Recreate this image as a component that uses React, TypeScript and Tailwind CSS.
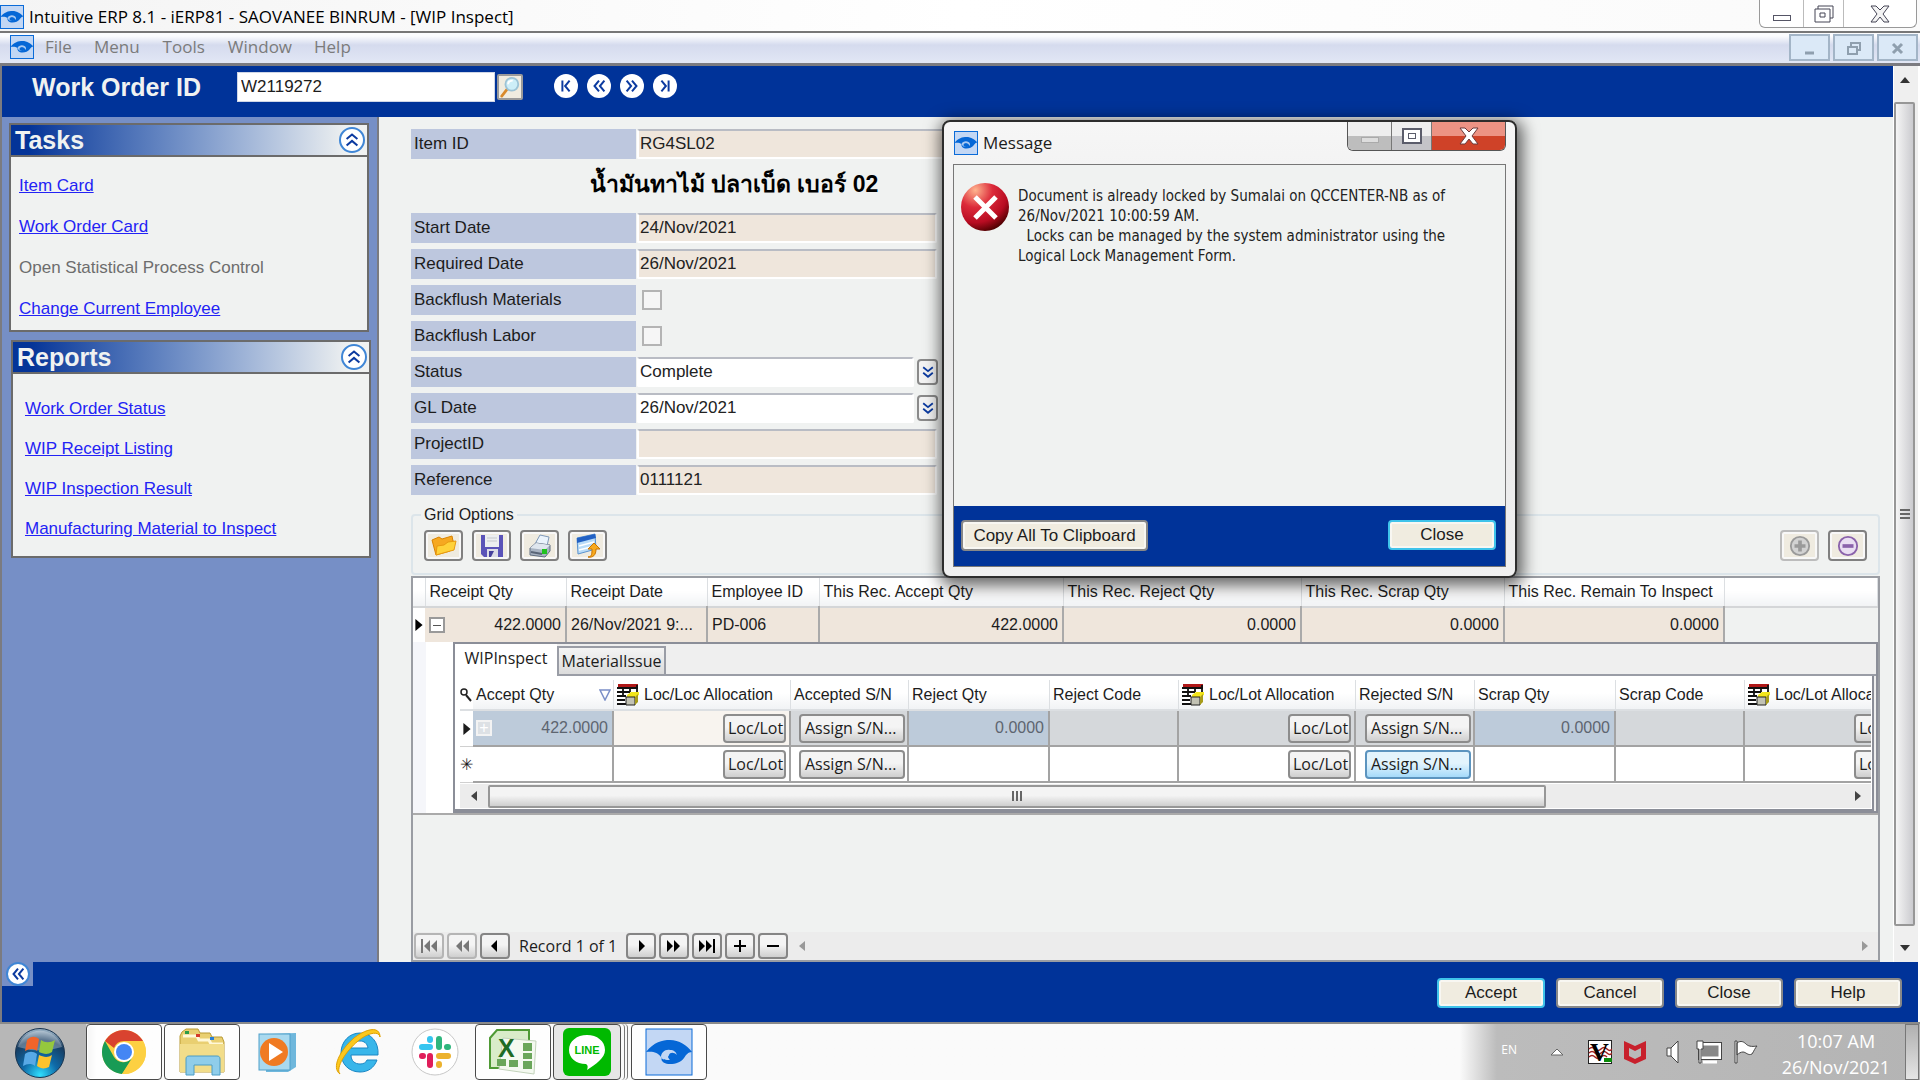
import type { ReactNode } from 'react';

function EyeLogo({ className }: { className: string }) {
  return (
    <svg viewBox="0 0 48 48" preserveAspectRatio="none" className={className} aria-hidden="true">
      <rect x="1" y="1" width="46" height="46" fill="#c3d7f4" stroke="#0b6bd8" strokeWidth="2" />
      <path d="M1 24C8 14 17 12 25 12c9 0 17 5 22 11-4 0-6 3-8 6-3 4-8 6-14 6-7 0-11-4-10-9-4-3-9-3-14-2z" fill="#0567d6" />
      <path d="M15 26c2-5 9-7 14-4 3 2 4 5 2 8-1-4-5-6-9-4 2 0 5 1 6 4-4 3-11 2-13-4z" fill="#a9c9f2" />
      <path d="M19 28c0-4 6-5 9-2 2 3 0 6-3 6-4 0-6-2-6-4z" fill="#0567d6" />
    </svg>
  );
}

function Chevrons({ dir, className }: { dir: 'left' | 'right' | 'up' | 'down' | 'first' | 'last'; className: string }) {
  const paths = {
    left: 'M10 4 5 10l5 6M16 4l-5 6 5 6',
    right: 'M4 4l5 6-5 6M10 4l5 6-5 6',
    up: 'M4 9l6-5 6 5M4 16l6-5 6 5',
    down: 'M4 4l6 5 6-5M4 11l6 5 6-5',
    first: 'M6 4v12M14 4l-5 6 5 6',
    last: 'M14 4v12M6 4l5 6-5 6',
  };
  return (
    <svg viewBox="0 0 20 20" className={className} fill="none" stroke="#0b3aa0" strokeWidth="2.2" aria-hidden="true">
      <path d={paths[dir]} />
    </svg>
  );
}

function TriangleIcon({ dir, className }: { dir: 'left' | 'right' | 'up' | 'down'; className: string }) {
  const pts = { left: '8,0 8,10 2,5', right: '2,0 2,10 8,5', up: '0,8 10,8 5,2', down: '0,2 10,2 5,8' };
  return (
    <svg viewBox="0 0 10 10" className={className} fill="currentColor" aria-hidden="true">
      <polygon points={pts[dir]} />
    </svg>
  );
}

function Magnifier() {
  return (
    <svg viewBox="0 0 24 24" className="size-6" aria-hidden="true">
      <path d="M3 22l7-9" stroke="#d98a2b" strokeWidth="3" strokeLinecap="round" />
      <circle cx="14" cy="9" r="7" fill="#cdeef8" stroke="#9cc3d6" strokeWidth="2" />
      <path d="M10 9c0-3 2-4 5-4" stroke="#fff" strokeWidth="2" fill="none" />
    </svg>
  );
}

function SidePanel({ title, children, className }: { title: string; children: ReactNode; className: string }) {
  return (
    <section className={`border-2 border-[#6b6b6b] bg-[#f0f2f1] ${className}`}>
      <header className="flex h-8 items-center justify-between border-b-2 border-[#6b6b6b] bg-linear-to-r from-[#043498] from-5% to-[#f0f2f1] to-95% pl-1 pr-[2px]">
        <h2 className="text-[25px] font-bold leading-7 text-[#f0f2f1]">{title}</h2>
        <button aria-label={`Collapse ${title}`} className="flex size-[26px] items-center justify-center rounded-full border-2 border-[#3f86d6] bg-white">
          <Chevrons dir="up" className="size-[18px]" />
        </button>
      </header>
      {children}
    </section>
  );
}

const fieldBox = 'h-[30px] rounded-xs border-2 border-t-[#b9bcc4] border-x-white border-b-white text-[17px] text-[#222] px-px outline-none';

function FormRow({ label, id, children }: { label: string; id: string; children: ReactNode }) {
  return (
    <div className="flex h-[30px] items-center">
      <label htmlFor={id} className="mr-px flex h-[30px] w-[225px] shrink-0 items-center bg-[#bdc7de] pl-[3px] text-[17px]">
        {label}
      </label>
      {children}
    </div>
  );
}

function ReadonlyField({ id, value }: { id: string; value: string }) {
  return <input id={id} readOnly defaultValue={value} className={`${fieldBox} w-[300px] bg-[#efe6dc]`} />;
}

function DropButton({ label }: { label: string }) {
  return (
    <button aria-label={label} className="ml-[3px] flex h-[26px] w-[21px] items-center justify-center rounded-sm border-2 border-[#8a8a8a] bg-[#f3f3f3]">
      <Chevrons dir="down" className="size-4 shrink-0" />
    </button>
  );
}

function ToolButton({ label, children, dim }: { label: string; children: ReactNode; dim?: boolean }) {
  return (
    <button
      aria-label={label}
      className={`flex h-[31px] w-[39px] items-center justify-center rounded-sm border-2 bg-[#efebe0] shadow-[inset_0_0_0_2px_#f8f8f8] ${dim ? 'border-[#bcbcbc]' : 'border-[#808080]'}`}
    >
      {children}
    </button>
  );
}

function FolderIcon() {
  return (
    <svg viewBox="0 0 26 24" className="h-6 w-[26px]" aria-hidden="true">
      <path d="M1 6l7-3 3 2 10-3 1 5 2 1-5 9-14 4z" fill="#f6a821" stroke="#d98200" />
      <path d="M5 21l1-9 7-1 4-3 8-1-2 9z" fill="#ffd23a" stroke="#e89a10" />
    </svg>
  );
}

function DiskIcon() {
  return (
    <svg viewBox="0 0 26 26" className="size-[26px]" aria-hidden="true">
      <path d="M2 2h22v22H5l-3-3z" fill="#5a53b8" />
      <rect x="6" y="2" width="14" height="12" fill="#eceef0" />
      <path d="M8 5h10M8 8h10" stroke="#c5c8cc" />
      <rect x="8" y="16" width="11" height="8" fill="#dcdce6" />
      <path d="M10 24v-6l5 0-3 6z" fill="#45409c" />
    </svg>
  );
}

function PrinterIcon() {
  return (
    <svg viewBox="0 0 26 26" className="size-[26px]" aria-hidden="true">
      <path d="M8 11 13 2l9 2-2 9z" fill="#eaf3fc" stroke="#7e98b8" />
      <path d="M3 15l6-5 14 2v6l-5 6-15-2z" fill="#a8b3c2" stroke="#5f6d80" />
      <path d="M3 15l6-5 14 2-5 5z" fill="#dfe6ee" />
      <path d="M4 19l11 2" stroke="#596577" strokeWidth="2" />
      <rect x="15" y="16" width="5" height="5" fill="#20c220" />
    </svg>
  );
}

function ExportIcon() {
  return (
    <svg viewBox="0 0 26 26" className="size-[26px]" aria-hidden="true">
      <path d="M2 5l18-4 1 15-18 5z" fill="#b9dcf8" stroke="#5b93cf" />
      <path d="M2 5l18-4 1 4L2 10z" fill="#2261c4" />
      <path d="M4 13l15-4M4 17l12-3" stroke="#fff" strokeWidth="1.500" />
      <path d="M13 24c4 0 4-4 4-8h-4l6-6 6 6h-4c0 6-3 9-8 8z" fill="#f7a91e" stroke="#c87400" />
    </svg>
  );
}

function CircleSign({ kind }: { kind: 'plus' | 'minus' }) {
  const c = kind === 'plus' ? '#9a9a9a' : '#8a62ab';
  return (
    <svg viewBox="0 0 24 24" className="size-[22px]" aria-hidden="true">
      <circle cx="12" cy="12" r="10" fill={kind === 'plus' ? '#d2d2d2' : '#e9def2'} stroke={c} strokeWidth="2" />
      <path d={kind === 'plus' ? 'M6 12h12M12 6v12' : 'M6 12h12'} stroke={c} strokeWidth="4" />
    </svg>
  );
}

function AllocIcon() {
  return (
    <svg viewBox="0 0 22 22" className="size-[22px] shrink-0" aria-hidden="true">
      <rect x="1" y="1" width="19" height="20" fill="#fff" />
      <rect x="1" y="0" width="20" height="3" fill="#b01818" />
      <path d="M0 4h21M0 8h13M0 12h9M0 16h8M0 20h9M6 4v7M13 4v4M20 1v9" stroke="#111" strokeWidth="1.800" />
      <path d="M10 11l4-3h8v3l-4 2h-8z" fill="#f2e51a" />
      <path d="M9 13h9v8H9z" fill="#c2c2b4" stroke="#222" />
      <path d="M18 13l3-3v8l-3 3z" fill="#a89c1a" />
    </svg>
  );
}

const gridHead = 'h-[29px] border-r border-[#dcdfe2] bg-linear-to-b from-white from-45% to-[#f1f3f5] px-1 text-left text-[16px] font-normal whitespace-nowrap';
const gradBtn = 'bg-linear-to-b from-[#f4f4f4] from-45% to-[#cfcfcf]';

function CellButton({ children, className }: { children: ReactNode; className: string }) {
  return (
    <button className={`ml-auto block h-[29px] overflow-hidden rounded-sm border-2 text-left font-['Open_Sans',sans-serif] text-[16px] leading-6 whitespace-nowrap ${className}`}>
      {children}
    </button>
  );
}

const outerCols = [
  ['Receipt Qty', '422.0000'],
  ['Receipt Date', '26/Nov/2021 9:...'],
  ['Employee ID', 'PD-006'],
  ['This Rec. Accept Qty', '422.0000'],
  ['This Rec. Reject Qty', '0.0000'],
  ['This Rec. Scrap Qty', '0.0000'],
  ['This Rec. Remain To Inspect', '0.0000'],
];

const innerHeads = ['Accept Qty', 'Loc/Loc Allocation', 'Accepted S/N', 'Reject Qty', 'Reject Code', 'Loc/Lot Allocation', 'Rejected S/N', 'Scrap Qty', 'Scrap Code', 'Loc/Lot Allocation'];

function InnerRow({ active }: { active: boolean }) {
  const cell = 'h-9 border-r-2 border-b-2 border-[#a3a3a3] p-0';
  const blue = active ? 'bg-[#bdcbda]' : 'bg-white';
  const gray = active ? 'bg-[#d5d8db]' : 'bg-white';
  const num = 'pr-1 text-right text-[16px] text-[#5d6570]';
  const std = `border-[#8c8c8c] ${gradBtn}`;
  const lot = <CellButton className={`mr-[3px] w-[63px] pl-[3px] ${std}`}>Loc/Lot</CellButton>;
  const assign = (hot: boolean) => (
    <CellButton className={`mr-[2px] w-[106px] pl-1 ${hot ? 'border-[#5c94bf] bg-linear-to-b from-[#e3f4fd] from-45% to-[#a5dafa]' : std}`}>
      Assign S/N...
    </CellButton>
  );
  return (
    <tr>
      <td className="border-b border-[#d0d0d0] p-0 text-center">
        {active ? <TriangleIcon dir="right" className="mx-auto h-[14px] w-3" /> : <span className="text-[16px] leading-4">✳</span>}
      </td>
      <td className={`${cell} ${blue} ${num}`}>
        {active && (
          <div className="flex items-center justify-between pl-[3px]">
            <button aria-label="Expand allocation" className="flex size-4 items-center justify-center border-2 border-[#f3f3f3] bg-[#dde1e5] text-[16px] leading-3 text-white">+</button>
            422.0000
          </div>
        )}
      </td>
      <td className={`${cell} ${active ? 'bg-[#f8f4ef]' : 'bg-white'}`}>{lot}</td>
      <td className={`${cell} ${gray}`}>{assign(false)}</td>
      <td className={`${cell} ${blue} ${num}`}>{active && '0.0000'}</td>
      <td className={`${cell} ${gray}`} />
      <td className={`${cell} ${gray}`}>{lot}</td>
      <td className={`${cell} ${gray}`}>{assign(!active)}</td>
      <td className={`${cell} ${blue} ${num}`}>{active && '0.0000'}</td>
      <td className={`${cell} ${gray}`} />
      <td className={`${cell} ${gray}`}>{lot}</td>
    </tr>
  );
}

function NavButton({ label, dim, children }: { label: string; dim?: boolean; children: ReactNode }) {
  return (
    <button aria-label={label} className={`flex h-[26px] w-[30px] items-center justify-center rounded-sm border-2 ${gradBtn} ${dim ? 'border-[#b5b5b5] text-[#777]' : 'border-[#858585] text-black'}`}>
      {children}
    </button>
  );
}

function NavGlyph({ d }: { d: string }) {
  return (
    <svg viewBox="0 0 20 14" className="h-[14px] w-5" fill="currentColor" aria-hidden="true">
      <path d={d} />
    </svg>
  );
}

const bigBtn = 'rounded-sm border-2 bg-[#f0ece0] text-[17px] shadow-[inset_0_0_0_2px_#f8f7f2]';

function MessageDialog() {
  return (
    <div role="dialog" aria-label="Message" className="absolute top-[120px] left-[942px] w-[575px] rounded-lg border-2 border-[#2d2d2d] bg-linear-to-b from-[#f6f6f6] via-[#e8e8e8] to-[#f0f0f0] px-[9px] pb-[9px] shadow-[2px_4px_16px_4px_rgba(0,0,0,0.6)]">
      <div className="flex h-[42px] items-start justify-between">
        <div className="flex items-center gap-[5px] pt-2 pl-px font-['Open_Sans',sans-serif] text-[17px]">
          <EyeLogo className="size-6" />
          Message
        </div>
        <div className="flex h-[29px] w-[159px] overflow-hidden rounded-b-md border border-t-0 border-[#555]">
          <button aria-label="Minimize" className="flex w-11 items-center justify-center border-r border-[#777] bg-linear-to-b from-[#eee] from-50% to-[#bdbdbd] to-50%">
            <span className="mt-2 h-[6px] w-[18px] border border-[#aaa] bg-[#ddd]" />
          </button>
          <button aria-label="Maximize" className="flex w-10 items-center justify-center border-r border-[#777] bg-linear-to-b from-[#eee] from-50% to-[#c4c4c8] to-50%">
            <span className="flex h-4 w-5 items-center justify-center border-2 border-[#5b5d6b] bg-white">
              <span className="h-[6px] w-2 border border-[#5b5d6b]" />
            </span>
          </button>
          <button aria-label="Close message" className="flex flex-1 items-center justify-center bg-linear-to-b from-[#ec9384] from-50% to-[#cf4228] to-50%">
            <svg viewBox="0 0 20 18" className="h-[18px] w-5" aria-hidden="true">
              <path d="M1 1h5l4 4 4-4h5l-6 8 6 8h-5l-4-5-4 5H1l6-8z" fill="#fff" stroke="#6b3a3a" />
            </svg>
          </button>
        </div>
      </div>
      <div className="border border-[#777]">
        <div className="flex h-[341px] gap-[9px] bg-[#f0f2f1] pt-[18px] pl-[7px]">
          <svg viewBox="0 0 48 48" className="size-12 shrink-0" aria-hidden="true">
            <defs>
              <radialGradient id="err" cx="0.3" cy="0.15" r="0.9">
                <stop offset="0" stopColor="#ffb58f" />
                <stop offset="0.400" stopColor="#dc2a3a" />
                <stop offset="0.750" stopColor="#b80c22" />
                <stop offset="1" stopColor="#4c0000" />
              </radialGradient>
            </defs>
            <circle cx="24" cy="24" r="24" fill="url(#err)" />
            <path d="M14 14l21 21M35 14 14 35" stroke="#fff" strokeWidth="5" />
          </svg>
          <p className="pt-[3px] font-['DejaVu_Sans_Condensed','Open_Sans',sans-serif] text-[15px] leading-5 whitespace-pre text-[#222]">
            {'Document is already locked by Sumalai on QCCENTER-NB as of\n26/Nov/2021 10:00:59 AM.\n  Locks can be managed by the system administrator using the\nLogical Lock Management Form.'}
          </p>
        </div>
        <div className="flex h-[60px] items-start justify-between bg-[#003399] pt-[14px] pr-[9px] pl-[7px]">
          <button className={`${bigBtn} h-[31px] w-[187px] border-[#888]`}>Copy All To Clipboard</button>
          <button className={`${bigBtn} h-[30px] w-[108px] border-[#3fc3ea]`}>Close</button>
        </div>
      </div>
    </div>
  );
}

const taskBtn = 'flex h-14 w-[76px] items-center justify-center rounded-sm border border-[#4a4a4a] bg-white/70 shadow-[inset_0_0_0_1px_#fff]';

function Taskbar() {
  return (
    <footer className="flex h-14 items-center bg-linear-to-r from-[#b7b7b7] from-4% via-[#fafafa] via-5% to-[#fafafa] to-76%">
      <button aria-label="Start" className="flex w-[86px] justify-center self-stretch bg-[#b7b7b7] pr-[6px]">
        <svg viewBox="0 0 52 52" className="mt-[3px] size-[52px]" aria-hidden="true">
          <defs>
            <radialGradient id="orb" cx="0.5" cy="0.95" r="0.9">
              <stop offset="0" stopColor="#2fe0ff" />
              <stop offset="0.400" stopColor="#0f6aa8" />
              <stop offset="0.800" stopColor="#173c60" />
              <stop offset="1" stopColor="#8fa8bc" />
            </radialGradient>
          </defs>
          <circle cx="26" cy="26" r="24.500" fill="url(#orb)" stroke="#1a3550" />
          <path d="M4 20a23 23 0 0 1 44 0q-22 7-44 0z" fill="#fff" opacity="0.300" />
          <path d="M13 13c4-4 8-4 12-1l-2 12c-4-3-8-2-12 0z" fill="#f0642a" />
          <path d="M27 13c4 3 9 3 14 0l-3 12c-4 3-9 2-13 0z" fill="#95c83e" />
          <path d="M11 27c4-3 8-3 12 0l-2 12c-4-3-8-2-12 0z" fill="#58a9e6" />
          <path d="M25 28c4 2 9 3 13 0l-3 12c-4 2-8 2-12-1z" fill="#fcc32c" />
        </svg>
      </button>
      <button aria-label="Chrome" className={taskBtn}>
        <svg viewBox="0 0 44 44" className="size-11" aria-hidden="true">
          <circle cx="22" cy="22" r="22" fill="#fdd042" />
          <path d="M3 11A22 22 0 0 1 41 11H22a11 11 0 0 0-10 7z" fill="#d9432f" />
          <path d="M3 11A22 22 0 0 0 20 44l10-16a11 11 0 0 1-18-1z" fill="#189b55" />
          <path d="M22 11h19a22 22 0 0 1 3 11 22 22 0 0 1-24 22l11-16a11 11 0 0 0-9-17z" fill="#fdd042" />
          <circle cx="22" cy="22" r="10" fill="#fff" />
          <circle cx="22" cy="22" r="8" fill="#4486f4" />
        </svg>
      </button>
      <button aria-label="File Explorer" className={`${taskBtn} ml-[2px]`}>
        <svg viewBox="0 0 48 48" className="size-12" aria-hidden="true">
          <path d="M4 4l4-3h12l2 4h10l2 4h10l2 5v30H2V8z" fill="#e9cf71" stroke="#b99a35" />
          <path d="M5 8h14l2 4h10l2 4h12" stroke="#fff8d8" strokeWidth="3" fill="none" />
          <rect x="7" y="3" width="4" height="3" fill="#2c9b48" />
          <rect x="18" y="6" width="4" height="3" fill="#d53a2a" />
          <rect x="32" y="9" width="4" height="3" fill="#2a7fd5" />
          <path d="M2 16h44v28H2z" fill="#f2dd8a" />
          <path d="M8 47V31c0-2 1-3 3-3h28c2 0 3 1 3 3v16h-8V37H16v10z" fill="#8fcdea" stroke="#4c9cc4" />
        </svg>
      </button>
      <button aria-label="Media Player" className="ml-[18px]">
        <svg viewBox="0 0 42 42" className="size-[42px]" aria-hidden="true">
          <path d="M8 3l30-1v34l-8 5H8z" fill="#6fb7dc" />
          <rect x="1" y="3" width="31" height="36" fill="#a9d9ef" stroke="#4f9fc9" />
          <circle cx="16" cy="21" r="14" fill="#f07a22" />
          <path d="M11 12v18l14-9z" fill="#fff" />
        </svg>
      </button>
      <button aria-label="Internet Explorer" className="ml-[34px]">
        <svg viewBox="0 0 48 48" className="size-12" aria-hidden="true">
          <path d="M44 27H17c0 6 4 9 9 9 3 0 6-1 7-4h10c-3 8-9 12-17 12-11 0-19-8-19-19S15 5 26 5s19 9 18 22zM17 20h17c-1-5-4-7-8-7s-8 2-9 7z" fill="#38b6ea" stroke="#1b87c4" />
          <path d="M6 46C-3 40 6 22 20 10 33 0 46-2 46 9c-1-6-11-5-22 4C12 23 1 40 6 46z" fill="#fcc81e" stroke="#e0a000" />
        </svg>
      </button>
      <button aria-label="Slack" className="ml-[29px]">
        <svg viewBox="0 0 48 48" className="size-12" aria-hidden="true">
          <circle cx="24" cy="24" r="23" fill="#fff" stroke="#c8c8c8" />
          <g strokeWidth="6" strokeLinecap="round">
            <path d="M11 19h8M19 11v1" stroke="#36c5f0" />
            <path d="M28 11v8M36 19h1" stroke="#2eb67d" />
            <path d="M28 28h9M28 36v1" stroke="#ecb22e" />
            <path d="M19 28v9M11 28h1" stroke="#e01e5a" />
          </g>
        </svg>
      </button>
      <button aria-label="Excel" className={`${taskBtn} ml-4`}>
        <svg viewBox="0 0 48 48" className="size-12" aria-hidden="true">
          <path d="M8 2h32v38H1V10z" fill="#d9ecc9" stroke="#4f9a35" strokeWidth="2" />
          <path d="M14 10l33 3-2 33-35-5z" fill="#f4f9f0" stroke="#c3d3bb" />
          <g fill="#6aa65a">
            <path d="M34 15h9v8h-9zM34 25h9v6h-9zM8 31h9v7H8zM20 32h9v7h-9zM34 33h9v8h-9z" />
          </g>
          <text x="9" y="29" fontSize="25" fontWeight="bold" fill="#1f6b24" fontFamily="Liberation Sans, sans-serif">X</text>
        </svg>
      </button>
      <div className="ml-[2px] flex rounded-sm border-r border-[#777] pr-[2px]">
        <div className="flex rounded-sm border-r border-[#777] pr-[3px]">
          <button aria-label="LINE" className="flex h-14 w-[68px] items-center justify-center rounded-sm border border-[#4a4a4a] bg-[#e6e6e6]">
            <svg viewBox="0 0 48 48" className="size-12" aria-hidden="true">
              <rect width="48" height="48" rx="6" fill="#00b900" />
              <path d="M24 7c10 0 18 6 18 15 0 8-9 14-18 20 1-3 1-5-1-6C13 36 6 30 6 22 6 13 14 7 24 7z" fill="#fff" />
              <text x="24" y="26" fontSize="11" fontWeight="bold" textAnchor="middle" fill="#00b900" fontFamily="Liberation Sans, sans-serif">LINE</text>
            </svg>
          </button>
        </div>
      </div>
      <button aria-label="Intuitive ERP" className={`${taskBtn} ml-[3px]`}>
        <svg viewBox="0 0 48 48" className="size-12" aria-hidden="true">
          <rect x="1" y="1" width="46" height="46" fill="#c3d7f4" stroke="#0b6bd8" />
          <path d="M1 24C9 14 17 12 25 12c9 0 17 5 22 12-4 0-6 3-8 6-3 4-8 6-14 6-5 0-8-2-9-5 2 1 1 1 0-2-3-5-9-6-15-5z" fill="#0567d6" />
          <path d="M16 29c0-4 4-8 9-7 4 0 6 2 7 5-3-3-7-3-8 0-1 2 0 4 1 5-4 0-8 0-9-3z" fill="#c3d7f4" />
          <path d="M23 29c1-3 5-4 7-1 1 3-4 7-7 1z" fill="#0567d6" />
        </svg>
      </button>
      <div className="ml-auto flex h-14 w-[460px] items-center justify-end bg-linear-to-r from-transparent from-0% via-[#bcbcbc] via-8% to-[#b4b4b4] font-['Open_Sans',sans-serif] text-white">
        <span className="mb-1 text-[12px]">EN</span>
        <button aria-label="Show hidden icons" className="ml-[33px]">
          <svg viewBox="0 0 14 8" className="h-2 w-[14px]" aria-hidden="true"><path d="M1 7l6-6 6 6z" fill="#fff" stroke="#666" /></svg>
        </button>
        <svg viewBox="0 0 24 24" className="ml-6 size-6" aria-hidden="true">
          <rect x="0.500" y="0.500" width="23" height="23" fill="#fff" stroke="#222" />
          <path d="M1 9q3-3 6 0t6 0 6 0 5 0M1 13q3-3 6 0t6 0 6 0 5 0M1 17q3-3 6 0t6 0 6 0" stroke="#a02020" strokeWidth="1.500" fill="none" />
          <rect x="16" y="18" width="8" height="4" fill="#0a8a0a" />
          <text x="2" y="21" fontSize="26" fontWeight="bold" fontFamily="Liberation Serif, serif">V</text>
        </svg>
        <svg viewBox="0 0 22 24" className="ml-3 h-6 w-[22px]" aria-hidden="true">
          <path d="M0 1l11 5 11-5v18l-11 5-11-5zM5 8v8l6 3 6-3V8l-6 3z" fill="#c8202c" fillRule="evenodd" />
        </svg>
        <svg viewBox="0 0 14 24" className="ml-5 h-6 w-[14px]" aria-hidden="true">
          <path d="M1 8h4l7-7v22l-7-7H1z" fill="#fff" stroke="#444" /><path d="M5 8v8" stroke="#444" />
        </svg>
        <svg viewBox="0 0 26 24" className="ml-4 h-6 w-[26px]" aria-hidden="true">
          <rect x="4" y="4" width="20" height="14" fill="#888" stroke="#fff" strokeWidth="3" />
          <rect x="2.500" y="2.500" width="23" height="17" fill="none" stroke="#444" />
          <path d="M7 22h14" stroke="#fff" strokeWidth="3" />
          <path d="M1 1h6v8H5v14H3V9H1z" fill="#fff" stroke="#444" />
        </svg>
        <svg viewBox="0 0 24 24" className="ml-3 size-6" aria-hidden="true">
          <path d="M1 1h2v22H1zM3 3c4-3 7-1 9 1s5 3 11 2c-2 2-3 5-5 8-4 2-6-2-9-2-2 0-4 1-6 3z" fill="#fff" stroke="#444" />
        </svg>
        <div className="ml-5 w-[116px] pt-1 text-center text-[18px] leading-[26px] whitespace-nowrap">
          <div>10:07 AM</div>
          <div>26/Nov/2021</div>
        </div>
        <button aria-label="Show desktop" className="mr-px ml-[11px] h-14 w-[14px] border border-[#777] bg-linear-to-b from-[#b0b0b0] to-[#e5e5e5]" />
      </div>
    </footer>
  );
}

export default function App() {
  return (
    <div className="relative flex min-h-screen w-full flex-col overflow-hidden bg-white font-['Liberation_Sans',Arial,sans-serif] text-[#1c1c1c]">
      <header className="flex h-[33px] items-start justify-between border-b-2 border-[#777] bg-linear-to-r from-[#f4f4f4] via-white to-[#fafafa] font-['Open_Sans',sans-serif]">
        <div className="flex items-center gap-[5px] pt-[5px] text-[17px] leading-6 text-black">
          <EyeLogo className="size-6" />
          <h1>Intuitive ERP 8.1 - iERP81 - SAOVANEE BINRUM - [WIP Inspect]</h1>
        </div>
        <div className="mr-[3px] flex h-7 w-[158px] rounded-b-md border border-t-0 border-[#999] bg-white">
          <button aria-label="Minimize window" className="flex w-11 items-center justify-center border-r border-[#bbb]">
            <span className="mt-2 h-[6px] w-[18px] border border-[#556]" />
          </button>
          <button aria-label="Restore window" className="flex w-10 items-center justify-center border-r border-[#bbb]">
            <svg viewBox="0 0 20 18" className="h-[18px] w-5" fill="#fff" stroke="#445" aria-hidden="true">
              <path d="M4 1h15v12H4z" /><path d="M1 4h15v13H1zM6 8h5v4H6z" />
            </svg>
          </button>
          <button aria-label="Close window" className="flex flex-1 items-center justify-center">
            <svg viewBox="0 0 20 18" className="h-[18px] w-5" aria-hidden="true">
              <path d="M1 1h5l4 4 4-4h5l-6 8 6 8h-5l-4-5-4 5H1l6-8z" fill="#f4f4f4" stroke="#445" />
            </svg>
          </button>
        </div>
      </header>

      <nav className="flex h-[33px] items-start justify-between border-b-[3px] border-[#7b7b80] bg-linear-to-b from-[#fbfcfe] from-10% via-[#d5dbee] via-40% to-[#e2e7f5] font-['Open_Sans',sans-serif] text-[#7b7b7b]">
        <div className="flex items-center pt-[2px] pl-[10px] text-[17px] leading-6">
          <EyeLogo className="size-6" />
          <button className="ml-[11px]">File</button>
          <button className="ml-[22px]">Menu</button>
          <button className="ml-[23px]">Tools</button>
          <button className="ml-[23px]">Window</button>
          <button className="ml-[22px]">Help</button>
        </div>
        <div className="flex gap-[3px] pt-px pr-[2px]">
          {['M7 15h9', 'M6 9h9v7H6zM9 9V5h9v7h-3', 'M7 6l9 9M16 6l-9 9'].map((d, i) => (
            <button key={d} aria-label={['Minimize form', 'Restore form', 'Close form'][i]} className="flex h-[27px] w-[41px] items-center justify-center border-2 border-[#a3b5c7] bg-[#dbe9f7]">
              <svg viewBox="0 0 23 20" className="h-5 w-[23px]" fill="none" stroke="#8f9fae" strokeWidth={i === 1 ? 2 : 3} aria-hidden="true"><path d={d} /></svg>
            </button>
          ))}
        </div>
      </nav>

      <div className="flex flex-1 flex-col border-l-2 border-[#7b7b80] pr-[2px]">
        <div className="flex flex-1">
          <div className="flex min-w-0 flex-1 flex-col">
            <div className="flex h-[51px] items-start bg-[#003399] pt-[6px] pl-[30px]">
              <label htmlFor="wo" className="w-[205px] text-[25px] leading-[30px] font-bold text-[#f0f2f1]">Work Order ID</label>
              <input id="wo" defaultValue="W2119272" className="h-[30px] w-[258px] border border-[#cfd6e6] bg-white px-[3px] text-[17px]" />
              <button aria-label="Find work order" className="ml-[2px] mt-[2px] flex h-[26px] w-[26px] items-center justify-center rounded-xs border-2 border-[#9a9a9a] bg-[#f0ece0]">
                <Magnifier />
              </button>
              <div className="ml-[31px] flex gap-[9px] pt-[2px]">
                {(['first', 'left', 'right', 'last'] as const).map((d) => (
                  <button key={d} aria-label={`Go ${d}`} className="flex size-6 items-center justify-center rounded-full bg-white">
                    <Chevrons dir={d} className="size-[18px]" />
                  </button>
                ))}
              </div>
            </div>

            <div className="flex flex-1">
              <aside className="w-[377px] shrink-0 border-r-2 border-[#7b7b80] bg-[#768fc6] pt-[6px] pl-[7px]">
                <SidePanel title="Tasks" className="w-[360px]">
                  <div className="flex h-[173px] flex-col items-start gap-[21px] pt-[19px] pl-2 text-[17px] leading-5 text-[#2323f5]">
                    <a href="#item" className="underline">Item Card</a>
                    <a href="#card" className="underline">Work Order Card</a>
                    <span className="text-[#6d6d6d]">Open Statistical Process Control</span>
                    <a href="#employee" className="underline">Change Current Employee</a>
                  </div>
                </SidePanel>
                <SidePanel title="Reports" className="mt-2 ml-[2px] w-[360px]">
                  <div className="flex h-[182px] flex-col items-start gap-5 pt-[25px] pl-3 text-[17px] leading-5 text-[#2323f5]">
                    <a href="#status" className="underline">Work Order Status</a>
                    <a href="#receipt" className="underline">WIP Receipt Listing</a>
                    <a href="#result" className="underline">WIP Inspection Result</a>
                    <a href="#material" className="underline">Manufacturing Material to Inspect</a>
                  </div>
                </SidePanel>
              </aside>

              <main className="flex min-w-0 flex-1 flex-col bg-[#f0f2f1] pt-3 pr-[13px] pl-8">
                <FormRow label="Item ID" id="item">
                  <input id="item" readOnly defaultValue="RG4SL02" className={`${fieldBox} w-[600px] bg-[#efe6dc]`} />
                </FormRow>
                <h2 className="flex h-[54px] w-[646px] items-start justify-center pt-[7px] text-[23px] leading-9 font-bold whitespace-nowrap text-black">น้ำมันทาไม้ ปลาเบ็ด เบอร์ 02</h2>
                <div className="flex flex-col gap-[6px]">
                  <FormRow label="Start Date" id="start"><ReadonlyField id="start" value="24/Nov/2021" /></FormRow>
                  <FormRow label="Required Date" id="req"><ReadonlyField id="req" value="26/Nov/2021" /></FormRow>
                  <FormRow label="Backflush Materials" id="bm"><input id="bm" type="checkbox" disabled className="ml-[5px] size-5 appearance-none border-2 border-[#b4b4b4] bg-[#f6f6f6]" /></FormRow>
                  <FormRow label="Backflush Labor" id="bl"><input id="bl" type="checkbox" disabled className="ml-[5px] size-5 appearance-none border-2 border-[#b4b4b4] bg-[#f6f6f6]" /></FormRow>
                  <FormRow label="Status" id="status">
                    <select id="status" className={`${fieldBox} w-[277px] appearance-none bg-white`}><option>Complete</option></select>
                    <DropButton label="Open status list" />
                  </FormRow>
                  <FormRow label="GL Date" id="gl">
                    <input id="gl" defaultValue="26/Nov/2021" className={`${fieldBox} w-[277px] bg-white`} />
                    <DropButton label="Open calendar" />
                  </FormRow>
                  <FormRow label="ProjectID" id="project"><ReadonlyField id="project" value="" /></FormRow>
                  <FormRow label="Reference" id="ref"><ReadonlyField id="ref" value="0111121" /></FormRow>
                </div>

                <fieldset className="mt-[10px] mb-px flex h-[70px] justify-between rounded-sm border-2 border-[#dce5ea] px-[11px] pt-[5px]">
                  <legend className="-ml-[3px] px-[3px] text-[16px] leading-5">Grid Options</legend>
                  <div className="flex gap-[9px]">
                    <ToolButton label="Open layout"><FolderIcon /></ToolButton>
                    <ToolButton label="Save layout"><DiskIcon /></ToolButton>
                    <ToolButton label="Print"><PrinterIcon /></ToolButton>
                    <ToolButton label="Export"><ExportIcon /></ToolButton>
                  </div>
                  <div className="flex gap-[9px]">
                    <ToolButton label="Add row" dim><CircleSign kind="plus" /></ToolButton>
                    <ToolButton label="Remove row"><CircleSign kind="minus" /></ToolButton>
                  </div>
                </fieldset>

                <div className="flex flex-1 flex-col border-2 border-[#9a9da3]">
                  <table className="w-full table-fixed border-collapse">
                    <colgroup>
                      <col className="w-3" /><col className="w-[141px]" /><col className="w-[141px]" /><col className="w-[112px]" /><col className="w-[244px]" /><col className="w-[238px]" /><col className="w-[203px]" /><col className="w-[220px]" /><col />
                    </colgroup>
                    <thead>
                      <tr className="border-b-2 border-[#d4d6d8]">
                        <th className={gridHead} />
                        {outerCols.map(([h]) => <th key={h} className={gridHead}>{h}</th>)}
                        <th className={gridHead} />
                      </tr>
                    </thead>
                    <tbody className="text-[16px]">
                      <tr>
                        <td className="bg-white p-0"><TriangleIcon dir="right" className="h-[14px] w-3 text-black" /></td>
                        {outerCols.map(([h, v], i) => (
                          <td key={h} className={`h-[35px] border-r-2 border-[#aaa] bg-[#efe6dc] px-1 whitespace-nowrap ${i === 1 || i === 2 ? '' : 'text-right'}`}>
                            {i === 0 ? (
                              <div className="flex items-center justify-between">
                                <button aria-label="Collapse row" className="flex size-4 items-center justify-center border-2 border-[#999] bg-white"><span className="h-px w-2 bg-[#555]" /></button>
                                {v}
                              </div>
                            ) : v}
                          </td>
                        ))}
                        <td />
                      </tr>
                    </tbody>
                  </table>

                  <div className="flex border-b-2 border-[#aaa]">
                    <div className="w-[13px] shrink-0 bg-[#f5f6fa]" />
                    <div className="w-[27px] shrink-0 bg-white" />
                    <div className="min-w-0 flex-1 border-2 border-[#8b8e98] bg-[#efefef]">
                      <div role="tablist" className="flex h-8 items-end border-b-2 border-[#9a9da6] text-[16px]">
                        <button role="tab" aria-selected="true" className="-mb-[2px] h-8 w-[102px] bg-white pb-1 font-['Open_Sans',sans-serif]">WIPInspect</button>
                        <button role="tab" aria-selected="false" className="h-7 w-[109px] border-2 border-b-0 border-[#9a9da6] bg-linear-to-b from-[#f4f4f4] to-[#dcdcdc] font-['Open_Sans',sans-serif] leading-6">MaterialIssue</button>
                      </div>
                      <div className="mr-[2px] border-r-2 border-b-2 border-[#8b8e98] bg-white pt-1 pr-px pb-px pl-[5px]">
                        <div className="overflow-hidden">
                          <table className="w-[1462px] table-fixed border-separate border-spacing-0">
                            <colgroup>
                              <col className="w-[13px]" /><col className="w-[141px]" /><col className="w-[177px]" /><col className="w-[118px]" /><col className="w-[141px]" /><col className="w-[129px]" /><col className="w-[177px]" /><col className="w-[119px]" /><col className="w-[141px]" /><col className="w-[129px]" /><col className="w-[177px]" />
                            </colgroup>
                            <thead>
                              <tr>
                                <th className="border-b-2 border-[#dcdfe2] p-0">
                                  <svg viewBox="0 0 12 14" className="h-[14px] w-3" fill="none" stroke="#222" aria-hidden="true"><circle cx="4" cy="4" r="3" strokeWidth="1.500" /><path d="M6 7l5 6" strokeWidth="2" /></svg>
                                </th>
                                {innerHeads.map((h, i) => (
                                  <th key={`${h}${i}`} className="h-[31px] border-r border-b-2 border-[#dcdfe2] bg-linear-to-b from-white from-45% to-[#f1f3f5] pr-0 pl-[3px] text-left text-[16px] font-normal whitespace-nowrap">
                                    <div className="flex items-center gap-[5px]">
                                      {h.includes('Allocation') && <AllocIcon />}
                                      {h}
                                      {i === 0 && <svg viewBox="0 0 12 12" className="mr-[2px] ml-auto size-3" fill="none" stroke="#7b8fc8" strokeWidth="1.500" aria-hidden="true"><path d="M1 1h10L6 11z" /></svg>}
                                    </div>
                                  </th>
                                ))}
                              </tr>
                            </thead>
                            <tbody>
                              <InnerRow active />
                              <InnerRow active={false} />
                            </tbody>
                          </table>
                        </div>
                        <div className="mt-px flex h-6 items-center bg-[#ececec]">
                          <button aria-label="Scroll left" className="flex w-7 justify-center text-[#444]"><TriangleIcon dir="left" className="size-[10px]" /></button>
                          <div className={`flex h-[23px] w-3/4 items-center justify-center gap-[2px] rounded-xs border-2 border-[#979797] ${gradBtn}`}>
                            <span className="h-[10px] w-[2px] bg-[#666]" /><span className="h-[10px] w-[2px] bg-[#666]" /><span className="h-[10px] w-[2px] bg-[#666]" />
                          </div>
                          <button aria-label="Scroll right" className="mr-2 ml-auto text-[#444]"><TriangleIcon dir="right" className="size-[10px]" /></button>
                        </div>
                      </div>
                    </div>
                  </div>

                  <div className="flex-1" />
                  <div className="flex h-7 items-center gap-[3px] bg-[#ececec] pl-px">
                    <NavButton label="First record" dim><NavGlyph d="M2 0h2v14H2zM11 1v12L5 7zM18 1v12l-6-6z" /></NavButton>
                    <NavButton label="Previous page" dim><NavGlyph d="M10 1v12L4 7zM17 1v12l-6-6z" /></NavButton>
                    <NavButton label="Previous record"><NavGlyph d="M12 1v12L6 7z" /></NavButton>
                    <span className="px-[6px] font-['Open_Sans',sans-serif] text-[16px] leading-6 whitespace-nowrap">Record 1 of 1</span>
                    <NavButton label="Next record"><NavGlyph d="M8 1v12l6-6z" /></NavButton>
                    <NavButton label="Next page"><NavGlyph d="M3 1v12l6-6zM10 1v12l6-6z" /></NavButton>
                    <NavButton label="Last record"><NavGlyph d="M2 1v12l6-6zM9 1v12l6-6zM16 0h2v14h-2z" /></NavButton>
                    <NavButton label="Add record"><NavGlyph d="M9 1h2v5h5v2h-5v5H9V8H4V6h5z" /></NavButton>
                    <NavButton label="Delete record"><NavGlyph d="M4 6h12v2H4z" /></NavButton>
                    <TriangleIcon dir="left" className="ml-[6px] size-[10px] text-[#999]" />
                    <TriangleIcon dir="right" className="mr-2 ml-auto size-[10px] text-[#999]" />
                  </div>
                </div>
              </main>
            </div>
          </div>

          <div className="flex w-[25px] shrink-0 flex-col items-center border-l border-white bg-[#efefef] pr-[3px]">
            <button aria-label="Scroll up" className="flex h-9 items-center pb-2 text-[#333]"><TriangleIcon dir="up" className="size-[10px]" /></button>
            <div className="flex w-full flex-1 flex-col items-center justify-center gap-[2px] rounded-xs border-2 border-[#979797] bg-linear-to-r from-[#f5f5f5] to-[#cbcbcf]">
              <span className="h-[2px] w-[10px] bg-[#666]" /><span className="h-[2px] w-[10px] bg-[#666]" /><span className="h-[2px] w-[10px] bg-[#666]" />
            </div>
            <button aria-label="Scroll down" className="flex h-9 items-center pt-2 text-[#333]"><TriangleIcon dir="down" className="size-[10px]" /></button>
          </div>
        </div>

        <div className="flex h-[60px] items-start justify-between bg-[#003399]">
          <button aria-label="Collapse side bar" className="flex h-6 w-[31px] items-center bg-[#768fc6] pl-1">
            <span className="flex size-6 items-center justify-center rounded-full border-2 border-[#3f86d6] bg-white"><Chevrons dir="left" className="size-[18px] shrink-0" /></span>
          </button>
          <div className="flex gap-[11px] pt-4 pr-4">
            <button className={`${bigBtn} h-[30px] w-[108px] border-[#3fc3ea]`}>Accept</button>
            <button className={`${bigBtn} h-[30px] w-[108px] border-[#888]`}>Cancel</button>
            <button className={`${bigBtn} h-[30px] w-[108px] border-[#888]`}>Close</button>
            <button className={`${bigBtn} h-[30px] w-[108px] border-[#888]`}>Help</button>
          </div>
        </div>
      </div>
      <div className="h-[2px] bg-[#8a8a8a]" />
      <Taskbar />
      <MessageDialog />
    </div>
  );
}
